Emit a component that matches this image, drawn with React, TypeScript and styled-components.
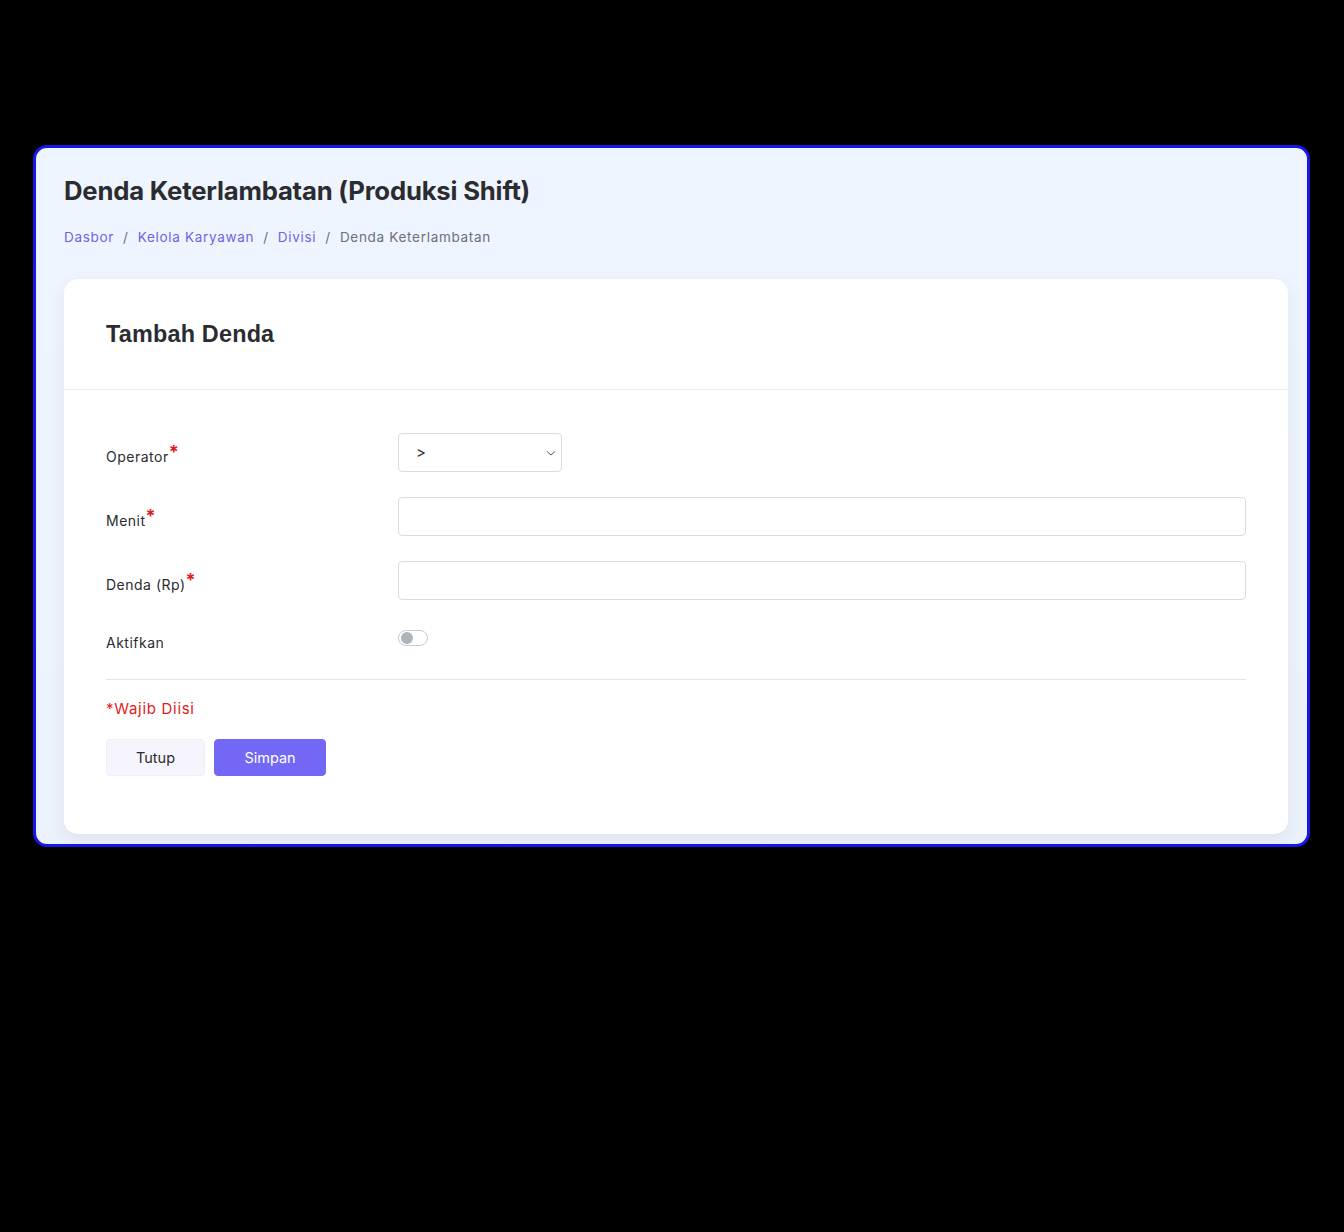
import React from "react";
import styled, { createGlobalStyle } from "styled-components";

const Global = createGlobalStyle`
  html, body { margin: 0; padding: 0; background: #000; }
  body { font-family: "Inter", "Noto Sans", sans-serif; }
  * { box-sizing: border-box; }
`;

const Stage = styled.div`
  width: 1344px;
  height: 1232px;
  padding: 145px 34px 0 33px;
  background: #000;
`;

const Window = styled.div`
  width: 1277px;
  height: 702px;
  border: 3px solid #1717e6;
  border-radius: 14px;
  background: linear-gradient(180deg, #eef5ff 0%, #eef4fd 60%, #ecf2fb 100%);
  padding: 25px 20px 0 28px;
  overflow: hidden;
`;

const Title = styled.h1`
  margin: 0;
  font-family: "Inter", sans-serif;
  font-weight: 700;
  font-size: 25.7px;
  line-height: 36px;
  letter-spacing: -0.2px;
  color: #2b2c30;
`;

const Crumbs = styled.nav`
  display: flex;
  align-items: center;
  gap: 9px;
  margin-top: 18px;
  font-size: 13.5px;
  letter-spacing: 0.7px;
  line-height: 20px;
`;

const Crumb = styled.span<{ $current?: boolean }>`
  color: ${(p) => (p.$current ? "#6b6f7a" : "#6f63e6")};
`;

const Sep = styled.span`
  color: #6b6f7a;
`;

const Card = styled.section`
  margin-top: 32px;
  width: 1224px;
  height: 555px;
  background: #fff;
  border-radius: 14px;
  box-shadow: 0 6px 18px rgba(30, 40, 60, 0.07);
`;

const CardHeader = styled.div`
  height: 111px;
  padding: 0 42px;
  display: flex;
  align-items: center;
  border-bottom: 1px solid #ebedf0;
`;

const CardTitle = styled.h2`
  margin: 0;
  font-family: "Liberation Sans", "Inter", sans-serif;
  font-weight: 700;
  font-size: 23.4px;
  letter-spacing: 0.2px;
  color: #2b2c30;
`;

const CardBody = styled.div`
  padding: 43px 42px 0 42px;
`;

const FormGrid = styled.div`
  display: grid;
  grid-template-columns: 292px 1fr;
  row-gap: 25px;
`;

const Label = styled.label<{ $top?: number }>`
  padding-top: ${(p) => (p.$top ?? 14)}px;
  font-size: 14px;
  line-height: 20px;
  letter-spacing: 0.5px;
  color: #2b2c30;
`;

const Req = styled.span`
  color: #e01b1b;
  font-size: 18px;
  font-weight: 700;
  position: relative;
  top: -4px;
  line-height: 0;
`;

const SelectBox = styled.div`
  position: relative;
  width: 164px;
  height: 39px;
  border: 1px solid #d8dbe0;
  border-radius: 4px;
  display: flex;
  align-items: center;
  padding-left: 17px;
  font-size: 15px;
  color: #333;
`;

const Chevron = styled.svg`
  position: absolute;
  right: 4px;
  top: 13px;
`;

const Input = styled.div`
  height: 39px;
  border: 1px solid #d8dbe0;
  border-radius: 4px;
  background: #fff;
`;

const SwitchCell = styled.div`
  padding-top: 5px;
  height: 29px;
`;

const Switch = styled.div`
  width: 30px;
  height: 16px;
  border: 1px solid #c7cbd1;
  border-radius: 8px;
  background: #fff;
  display: flex;
  align-items: center;
  padding-left: 2px;
`;

const Knob = styled.div`
  width: 12px;
  height: 12px;
  border-radius: 50%;
  background: #adb3bb;
`;

const Divider = styled.hr`
  margin: 25px 0 0 0;
  border: 0;
  border-top: 1px solid #e3e5e8;
`;

const Note = styled.div`
  margin-top: 19px;
  color: #e01b1b;
  font-size: 15px;
  letter-spacing: 0.7px;
  line-height: 20px;
`;

const Actions = styled.div`
  display: flex;
  gap: 9px;
  margin-top: 20px;
`;

const Button = styled.button<{ $primary?: boolean }>`
  height: 37px;
  width: ${(p) => (p.$primary ? "112px" : "99px")};
  border-radius: 4px;
  border: 1px solid ${(p) => (p.$primary ? "#7367f5" : "#eeedf8")};
  background: ${(p) => (p.$primary ? "#7367f5" : "#f6f5fd")};
  color: ${(p) => (p.$primary ? "#fff" : "#2b2c30")};
  font-family: "Inter", sans-serif;
  font-size: 14.5px;
  font-weight: 400;
  cursor: pointer;
`;

export default function App() {
  return (
    <>
      <Global />
      <Stage>
        <Window>
          <Title>Denda Keterlambatan (Produksi Shift)</Title>
          <Crumbs>
            <Crumb>Dasbor</Crumb>
            <Sep>/</Sep>
            <Crumb>Kelola Karyawan</Crumb>
            <Sep>/</Sep>
            <Crumb>Divisi</Crumb>
            <Sep>/</Sep>
            <Crumb $current>Denda Keterlambatan</Crumb>
          </Crumbs>
          <Card>
            <CardHeader>
              <CardTitle>Tambah Denda</CardTitle>
            </CardHeader>
            <CardBody>
              <FormGrid>
                <Label>
                  Operator<Req>*</Req>
                </Label>
                <div>
                  <SelectBox>
                    &gt;
                    <Chevron width="12" height="12" viewBox="0 0 12 12">
                      <path d="M2 4.5 L6 8 L10 4.5" fill="none" stroke="#555" strokeWidth="1" />
                    </Chevron>
                  </SelectBox>
                </div>
                <Label>
                  Menit<Req>*</Req>
                </Label>
                <Input />
                <Label>
                  Denda (Rp)<Req>*</Req>
                </Label>
                <Input />
                <Label $top={8}>Aktifkan</Label>
                <SwitchCell>
                  <Switch>
                    <Knob />
                  </Switch>
                </SwitchCell>
              </FormGrid>
              <Divider />
              <Note>*Wajib Diisi</Note>
              <Actions>
                <Button>Tutup</Button>
                <Button $primary>Simpan</Button>
              </Actions>
            </CardBody>
          </Card>
        </Window>
      </Stage>
    </>
  );
}
